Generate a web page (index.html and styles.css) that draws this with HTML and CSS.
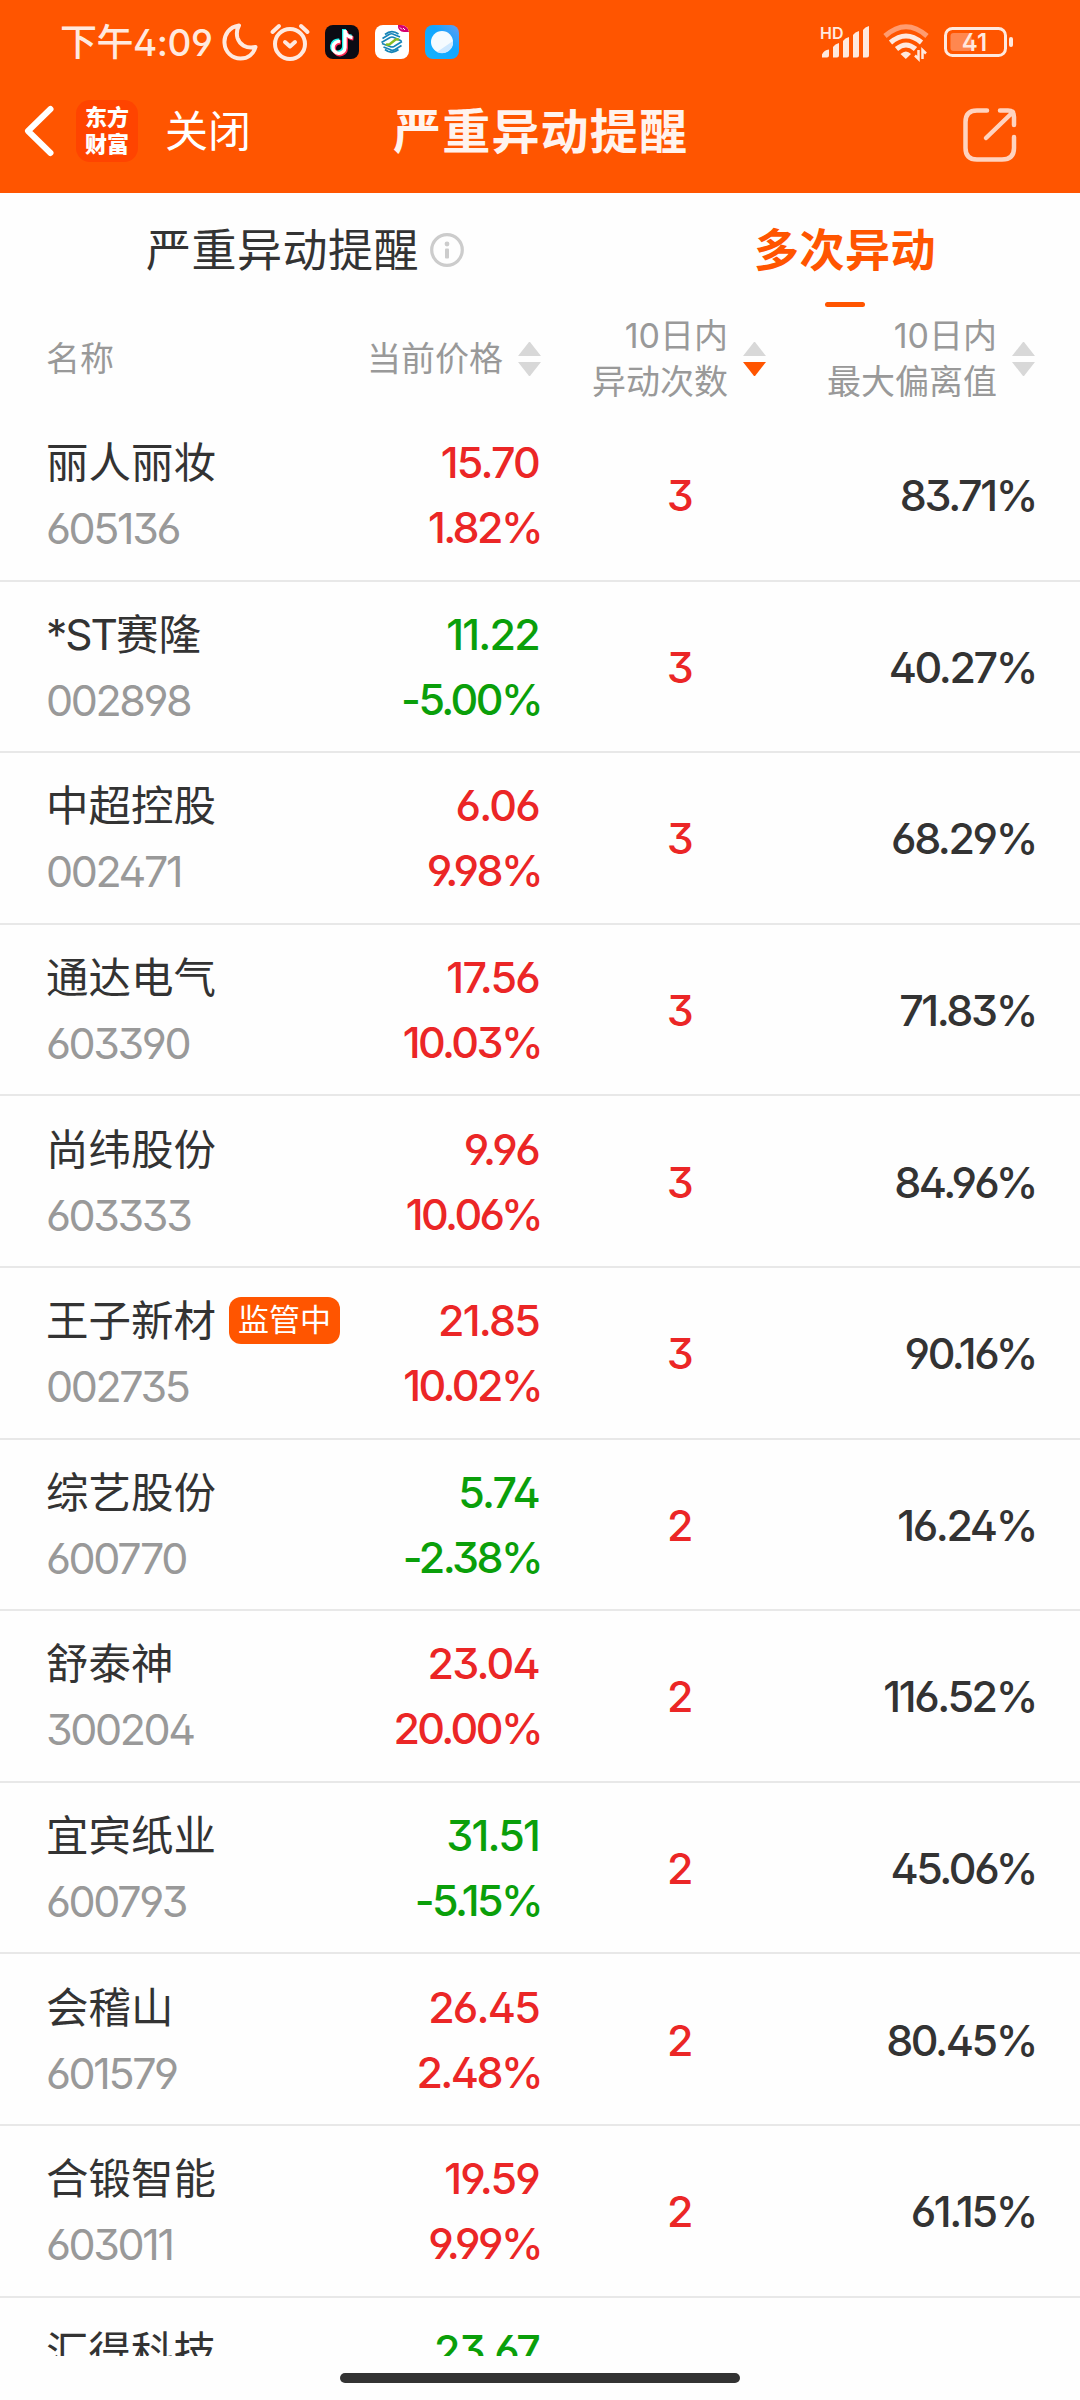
FILE: index.html
```html
<!DOCTYPE html>
<html lang="zh-CN">
<head>
    <meta charset="UTF-8">
    <meta name="viewport" content="width=device-width, initial-scale=1.0">
    <title>严重异动提醒</title>
    <link rel="stylesheet" href="styles.css">
</head>
<body>
    <header class="top">
        <!-- Status bar -->
        <div class="status-bar">
            <div class="status-left">
                <span class="clock">下午4:09</span>
                <svg class="moon" width="36" height="38" viewBox="0 0 36 38" fill="none" stroke="#ffe9df" stroke-width="4" stroke-linejoin="round">
                    <path d="M17 2.500C7 4 2 12 2.500 20C3 29 10 35.500 18.500 35.500C26 35.500 31.500 31 33.500 24C24 26 17.500 21.500 15.500 15C14.300 10.500 15 6 17 2.500Z"/>
                </svg>
                <svg class="alarm" width="40" height="38" viewBox="0 0 40 38" fill="none" stroke="#ffe9df" stroke-width="4" stroke-linecap="round" stroke-linejoin="round">
                    <circle cx="20" cy="21" r="15"/>
                    <path d="M15 19L20 23.500L25 19M2.500 9L9 3M37.500 9L31 3"/>
                </svg>
                <svg class="app" width="34" height="34" viewBox="0 0 34 34">
                    <rect width="34" height="34" rx="8" fill="#0b0b14"/>
                    <g fill="none" stroke-width="4">
                        <path d="M14 15.500a6 6 0 1 0 5 6V4c0 4 3 7 7.500 7.500" stroke="#25f4ee"/>
                        <path d="M16 17.500a6 6 0 1 0 5 6V6c0 4 3 7 7.500 7.500" stroke="#fe2c55"/>
                        <path d="M15 16.500a6 6 0 1 0 5 6V5c0 4 3 7 7.500 7.500" stroke="#fff" stroke-width="3.400"/>
                    </g>
                </svg>
                <svg class="app" width="34" height="34" viewBox="0 0 34 34">
                    <rect width="34" height="34" rx="8" fill="#fff"/>
                    <path d="M23 0h3a8 8 0 0 1 8 7h-5a6 6 0 0 1-6-7z" fill="#d6006f"/>
                    <path d="M25 2.500l2 2M28 3l2 2" stroke="#fff" stroke-width="1"/>
                    <g fill="none" stroke="#1684b7" stroke-width="1.700">
                        <path d="M10 9.500Q16.500 4 23.500 9M7.500 13.500L14 9.500Q16.500 8 19 9.500L25 12M6.500 17.500L15 12.500Q17 11.500 19 12.500L26.500 16"/>
                        <path d="M23.500 24.500Q16.500 30 10 24.500M26.500 20.500L20 24.500Q17 26 15 24.500L8.500 22M27 16.500L19 21.500Q17 22.500 15 21.500L7 18.500"/>
                    </g>
                    <path d="M11 19q2 1.500 4 0l5-4q2-1.500 4 0" fill="none" stroke="#86bc25" stroke-width="2.400"/>
                </svg>
                <svg class="app" width="34" height="34" viewBox="0 0 34 34">
                    <defs>
                        <linearGradient id="sky" x1="0" y1="1" x2="1" y2="0">
                            <stop offset="0" stop-color="#12b4ff"/>
                            <stop offset=".6" stop-color="#12a5ff"/>
                            <stop offset="1" stop-color="#6a9cf0"/>
                        </linearGradient>
                    </defs>
                    <rect width="34" height="34" rx="8" fill="url(#sky)"/>
                    <circle cx="17" cy="17" r="11" fill="#f5fbff"/>
                    <path d="M28 16A11 11 0 0 1 12 27Z" fill="#cde8ff"/>
                </svg>
            </div>
            <div class="status-right">
                <svg class="signal" width="52" height="34" viewBox="0 0 52 34" fill="#ffe9df">
                    <text x="0" y="13.500" class="hd">HD</text>
                    <path d="M2 32.500v-3q2-4.500 7-5v6q0 2-2 2zM13 32.500V22q2-3 6-4v12.500q0 2-2 2zM23 32.500V16q2-3 6-4v18.500q0 2-2 2zM33 32.500V10q2-3 6-4v24.500q0 2-2 2zM43 32.500V5q2-3 6-4v29.500q0 2-2 2z"/>
                </svg>
                <svg class="wifi" width="46" height="36" viewBox="0 0 46 36" fill="none" stroke="#ffe9df" stroke-width="5">
                    <path d="M2 12Q23-6.500 44 12" stroke="#ff9c70"/>
                    <path d="M7.500 18.500Q23 5.500 38.500 18.500M13.500 25Q23 17 32.500 25"/>
                    <path d="M17.500 30Q23 25 28 30L22.800 35Z" fill="#ffe9df" stroke="none"/>
                    <path d="M35.500 26v9l-3.500-3.500M39.500 35v-9l3.500 3.500" stroke-width="2.500"/>
                </svg>
                <svg class="battery" width="70" height="30" viewBox="0 0 70 30">
                    <rect x="1.500" y="1.500" width="60" height="27" rx="7" fill="none" stroke="#ffe9df" stroke-width="3"/>
                    <rect x="6.500" y="6" width="21" height="18" rx="3" fill="#ff874f"/>
                    <rect x="65" y="10" width="4" height="10" rx="2" fill="#ffe9df"/>
                    <text x="30.500" y="24" class="level">41</text>
                </svg>
            </div>
        </div>

        <!-- Navigation -->
        <nav class="nav-bar">
            <svg class="back" width="30" height="50" viewBox="0 0 30 50" fill="none" stroke="#fff" stroke-width="6" stroke-linecap="round" stroke-linejoin="round">
                <path d="M26.500 3L4 25L26.500 47"/>
            </svg>
            <div class="logo">东方<br>财富</div>
            <span class="close">关闭</span>
            <h1 class="title">严重异动提醒</h1>
            <svg class="share" width="54" height="54" viewBox="0 0 54 54" fill="none" stroke="#ffd3bf" stroke-width="4.500" stroke-linecap="round" stroke-linejoin="round">
                <path d="M24 2.500H14Q2.500 2.500 2.500 14V40Q2.500 51.500 14 51.500H39Q51 51.500 51 40V29M37 2.500H45Q51 2.500 51 9V17M50 4L23 30"/>
            </svg>
        </nav>
    </header>

    <!-- Tabs -->
    <div class="tabs">
        <div class="tab">
            严重异动提醒
            <svg class="info" width="34" height="34" viewBox="0 0 34 34">
                <circle cx="17" cy="17" r="15.300" fill="none" stroke="#ccc" stroke-width="3.200"/>
                <circle cx="17" cy="11" r="2.400" fill="#ccc"/>
                <rect x="15" y="15.500" width="4" height="10" rx="1" fill="#ccc"/>
            </svg>
        </div>
        <div class="tab active">多次异动</div>
    </div>

    <!-- Column heads -->
    <div class="row head">
        <div class="name-col">名称</div>
        <div class="price-col sortable">当前价格<span class="sort"></span></div>
        <div class="head-count sortable"><span>10日内<br>异动次数</span><span class="sort desc"></span></div>
        <div class="head-dev sortable"><span>10日内<br>最大偏离值</span><span class="sort"></span></div>
    </div>

    <main class="list">
        <div class="row">
            <div class="name-col"><p class="name">丽人丽妆</p><p class="code">605136</p></div>
            <div class="price-col up"><p>15.70</p><p class="pct">1.82%</p></div>
            <div class="count-col">3</div>
            <div class="dev-col">83.71%</div>
        </div>
        <div class="row">
            <div class="name-col"><p class="name"><span class="st">*ST</span>赛隆</p><p class="code">002898</p></div>
            <div class="price-col down"><p>11.22</p><p class="pct">-5.00%</p></div>
            <div class="count-col">3</div>
            <div class="dev-col">40.27%</div>
        </div>
        <div class="row">
            <div class="name-col"><p class="name">中超控股</p><p class="code">002471</p></div>
            <div class="price-col up"><p>6.06</p><p class="pct">9.98%</p></div>
            <div class="count-col">3</div>
            <div class="dev-col">68.29%</div>
        </div>
        <div class="row">
            <div class="name-col"><p class="name">通达电气</p><p class="code">603390</p></div>
            <div class="price-col up"><p>17.56</p><p class="pct">10.03%</p></div>
            <div class="count-col">3</div>
            <div class="dev-col">71.83%</div>
        </div>
        <div class="row">
            <div class="name-col"><p class="name">尚纬股份</p><p class="code">603333</p></div>
            <div class="price-col up"><p>9.96</p><p class="pct">10.06%</p></div>
            <div class="count-col">3</div>
            <div class="dev-col">84.96%</div>
        </div>
        <div class="row">
            <div class="name-col"><p class="name">王子新材<span class="badge">监管中</span></p><p class="code">002735</p></div>
            <div class="price-col up"><p>21.85</p><p class="pct">10.02%</p></div>
            <div class="count-col">3</div>
            <div class="dev-col">90.16%</div>
        </div>
        <div class="row">
            <div class="name-col"><p class="name">综艺股份</p><p class="code">600770</p></div>
            <div class="price-col down"><p>5.74</p><p class="pct">-2.38%</p></div>
            <div class="count-col">2</div>
            <div class="dev-col">16.24%</div>
        </div>
        <div class="row">
            <div class="name-col"><p class="name">舒泰神</p><p class="code">300204</p></div>
            <div class="price-col up"><p>23.04</p><p class="pct">20.00%</p></div>
            <div class="count-col">2</div>
            <div class="dev-col">116.52%</div>
        </div>
        <div class="row">
            <div class="name-col"><p class="name">宜宾纸业</p><p class="code">600793</p></div>
            <div class="price-col down"><p>31.51</p><p class="pct">-5.15%</p></div>
            <div class="count-col">2</div>
            <div class="dev-col">45.06%</div>
        </div>
        <div class="row">
            <div class="name-col"><p class="name">会稽山</p><p class="code">601579</p></div>
            <div class="price-col up"><p>26.45</p><p class="pct">2.48%</p></div>
            <div class="count-col">2</div>
            <div class="dev-col">80.45%</div>
        </div>
        <div class="row">
            <div class="name-col"><p class="name">合锻智能</p><p class="code">603011</p></div>
            <div class="price-col up"><p>19.59</p><p class="pct">9.99%</p></div>
            <div class="count-col">2</div>
            <div class="dev-col">61.15%</div>
        </div>
        <div class="row last">
            <div class="name-col"><p class="name">汇得科技</p></div>
            <div class="price-col down"><p>23.67</p></div>
        </div>
    </main>

    <footer class="home-area"><div class="home-bar"></div></footer>
</body>
</html>
```

FILE: styles.css
```css
* {
    margin: 0;
    padding: 0;
    box-sizing: border-box;
}

body {
    width: 1080px;
    height: 2400px;
    display: flex;
    flex-direction: column;
    font-family: Inter, "Noto Sans CJK SC", sans-serif;
    font-feature-settings: "ss01", "cv09";
    background: #fefefe;
    color: #333;
    overflow: hidden;
}

svg {
    display: block;
    flex-shrink: 0;
    overflow: visible;
}

/* Header */
.top {
    height: 193px;
    background: #ff5500;
    color: #fff;
}

.status-bar {
    height: 84px;
    padding: 0 66px 0 60px;
    display: flex;
    justify-content: space-between;
    align-items: center;
}

.status-left, .status-right {
    display: flex;
    align-items: center;
}

.clock {
    width: 162px;
    margin-top: -4px;
    font-size: 37px;
    font-weight: 500;
    letter-spacing: -0.5px;
    white-space: nowrap;
    color: #ffe9df;
}

.alarm {
    margin-left: 12px;
}

.app {
    margin-left: 16px;
}

.alarm + .app {
    margin-left: 15px;
}

.hd {
    font-size: 16px;
    font-weight: 600;
}

.wifi {
    margin-left: 11px;
}

.battery {
    margin-left: 15px;
}

.level {
    font-size: 24px;
    font-weight: 600;
    text-anchor: middle;
    fill: #ffe9df;
}

.nav-bar {
    height: 94px;
    padding: 0 63px 0 24px;
    display: flex;
    align-items: center;
}

.logo {
    width: 62px;
    height: 62px;
    margin-left: 22px;
    padding-top: 4px;
    border-radius: 14px;
    background: #ff4400;
    font-size: 22px;
    font-weight: 900;
    line-height: 27px;
    text-align: center;
}

.close {
    margin-left: 27px;
    margin-top: -6px;
    font-size: 43px;
}

.title {
    margin-left: 142px;
    margin-top: -6px;
    font-size: 48px;
    font-weight: 700;
    letter-spacing: 1.2px;
    color: #fff3ee;
}

.share {
    margin-left: auto;
    margin-top: 8px;
}

/* Tabs */
.tabs {
    height: 115px;
    display: grid;
    grid-template-columns: 610px 470px;
}

.tab {
    height: 115px;
    padding-bottom: 6px;
    display: flex;
    justify-content: center;
    align-items: center;
    font-size: 45px;
    letter-spacing: 0.5px;
    position: relative;
}

.info {
    margin-left: 11px;
    margin-top: 4px;
}

.tab.active {
    font-weight: 700;
    color: #ff5500;
}

.tab.active::after {
    content: "";
    position: absolute;
    left: 215px;
    bottom: 1px;
    width: 40px;
    height: 5px;
    border-radius: 3px;
    background: #ff5500;
}

/* Rows */
.row {
    height: 171.6px;
    display: grid;
    grid-template-columns: 341px 200px 276px 219px;
    align-items: center;
    border-bottom: 2px solid #e8e8e8;
}

.name-col {
    padding-left: 46px;
}

.price-col {
    text-align: right;
}

.head {
    height: 102px;
    border: 0;
    grid-template-columns: 341px 200px 225px 269px;
    font-size: 34px;
    line-height: 46px;
    color: #999;
}

.sortable {
    display: flex;
    justify-content: flex-end;
    align-items: center;
    text-align: right;
}

.sort {
    width: 23px;
    margin-left: 15px;
}

.sort::before, .sort::after {
    content: "";
    display: block;
    border: 11.5px solid transparent;
}

.sort::before {
    border-top: 0;
    border-bottom: 14px solid #d8d8d8;
}

.sort::after {
    margin-top: 6px;
    border-bottom: 0;
    border-top: 14px solid #d8d8d8;
}

.sort.desc::after {
    border-top-color: #ff5500;
}

.list {
    height: 1946px;
    overflow: hidden;
}

.list .row {
    padding-top: 1px;
}

.list .row > div {
    font-size: 43px;
    letter-spacing: -2.4px;
}

.list .row p {
    height: 65px;
    line-height: 65px;
}

.list .row p.name {
    height: 67px;
    display: flex;
    align-items: center;
    font-size: 42.5px;
    letter-spacing: 0;
}

.list .last {
    align-items: start;
    padding-top: 20px;
}

.st {
    letter-spacing: -2px;
}

.code {
    color: #999;
}

.list .price-col, .list .count-col, .list .dev-col {
    font-weight: 550;
}

.list .price-col p {
    padding-right: 2px;
    letter-spacing: -1.8px;
}

.list .price-col .pct, .list .dev-col {
    padding-right: 0;
    letter-spacing: -2.6px;
}

.count-col {
    text-align: center;
    color: #eb2626;
}

.dev-col {
    text-align: right;
}

.up {
    color: #eb2626;
}

.down {
    color: #0a9f0a;
}

.badge {
    width: 111px;
    height: 47px;
    margin-left: 13px;
    border-radius: 12px;
    background: #ff5500;
    color: #fff;
    font-size: 31px;
    line-height: 46px;
    text-align: center;
}

/* Home indicator */
.home-area {
    height: 44px;
    padding-top: 17px;
}

.home-bar {
    width: 400px;
    height: 10px;
    margin: 0 auto;
    border-radius: 5px;
    background: #333;
}
```
